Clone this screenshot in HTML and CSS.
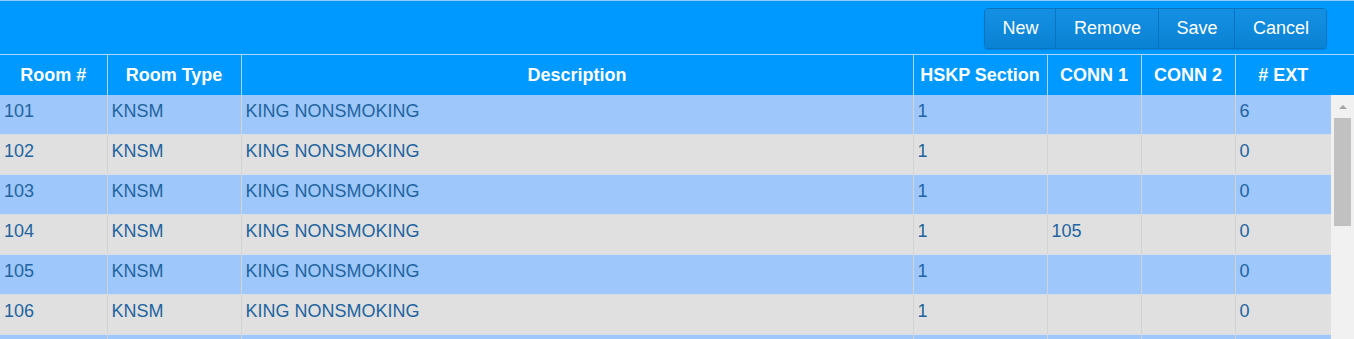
FILE: index.html
```html
<!DOCTYPE html>
<html lang="en">
<head>
  <meta charset="UTF-8">
  <title>Rooms</title>
  <link rel="stylesheet" href="styles.css">
</head>
<body>
  <div class="toolbar">
    <div class="btn-group">
      <button class="btn">New</button>
      <button class="btn">Remove</button>
      <button class="btn">Save</button>
      <button class="btn">Cancel</button>
    </div>
  </div>

  <div class="grid-head">
    <table class="head-table">
      <colgroup>
        <col class="c-room"><col class="c-type"><col class="c-desc"><col class="c-hskp">
        <col class="c-conn"><col class="c-conn"><col class="c-ext"><col class="c-gutter">
      </colgroup>
      <tr>
        <th>Room #</th>
        <th>Room Type</th>
        <th>Description</th>
        <th>HSKP Section</th>
        <th>CONN 1</th>
        <th>CONN 2</th>
        <th># EXT</th>
        <th class="gutter"></th>
      </tr>
    </table>
  </div>

  <div class="grid-body">
    <div class="rows">
      <table class="body-table">
        <colgroup>
          <col class="c-room"><col class="c-type"><col class="c-desc"><col class="c-hskp">
          <col class="c-conn"><col class="c-conn"><col class="c-ext">
        </colgroup>
        <tbody>
          <tr><td>101</td><td>KNSM</td><td>KING NONSMOKING</td><td>1</td><td></td><td></td><td>6</td></tr>
          <tr><td>102</td><td>KNSM</td><td>KING NONSMOKING</td><td>1</td><td></td><td></td><td>0</td></tr>
          <tr><td>103</td><td>KNSM</td><td>KING NONSMOKING</td><td>1</td><td></td><td></td><td>0</td></tr>
          <tr><td>104</td><td>KNSM</td><td>KING NONSMOKING</td><td>1</td><td>105</td><td></td><td>0</td></tr>
          <tr><td>105</td><td>KNSM</td><td>KING NONSMOKING</td><td>1</td><td></td><td></td><td>0</td></tr>
          <tr><td>106</td><td>KNSM</td><td>KING NONSMOKING</td><td>1</td><td></td><td></td><td>0</td></tr>
          <tr><td>107</td><td>KNSM</td><td>KING NONSMOKING</td><td>1</td><td></td><td></td><td>0</td></tr>
        </tbody>
      </table>
    </div>
    <div class="scrollbar">
      <span class="arrow-up"></span>
      <span class="thumb"></span>
    </div>
  </div>
</body>
</html>
```

FILE: styles.css
```css
body {
  margin: 0;
  font-family: "Liberation Sans", Arial, sans-serif;
  background-color: #f1f1f1;
  overflow: hidden;
}
.toolbar {
  height: 54px;
  box-sizing: border-box;
  border-top: 1px solid #8fcdff;
  background-color: #0099ff;
  display: flex;
  justify-content: flex-end;
  padding: 7px 27px 0 0;
}
.btn-group {
  display: flex;
  height: 39px;
  border: 1px solid #0a73c2;
  border-radius: 4px;
  overflow: hidden;
  box-shadow: 0 1px 1px rgba(0, 60, 120, 0.25);
}
.btn {
  font-family: inherit;
  font-size: 18px;
  color: #fff;
  background: linear-gradient(#1490e2, #0a82d4);
  border: none;
  border-left: 1px solid #0a73c2;
  padding: 0 17px 0 17.5px;
  margin: 0;
  cursor: pointer;
}
.btn:first-child {
  border-left: none;
}
.btn:hover {
  background: #0a78c4;
}
table {
  border-collapse: collapse;
  table-layout: fixed;
}
.c-room { width: 107px; }
.c-type { width: 134px; }
.c-desc { width: 672px; }
.c-hskp { width: 134px; }
.c-conn { width: 94px; }
.c-ext { width: 96px; }
.c-gutter { width: 23px; }
.grid-head {
  border-top: 1px solid #a8d8ff;
  background-color: #0099ff;
}
.head-table {
  width: 1354px;
}
.head-table th {
  height: 40px;
  padding: 0;
  font-size: 18px;
  font-weight: bold;
  color: #fff;
  text-align: center;
  border-left: 1px solid #b5d3ea;
}
.head-table th:first-child,
.head-table th.gutter {
  border-left: none;
}
.grid-body {
  display: flex;
  height: 244px;
  overflow: hidden;
}
.rows {
  width: 1331px;
}
.body-table {
  width: 1331px;
}
.body-table td {
  height: 22px;
  padding: 5px 4px 12px;
  line-height: 22px;
  font-size: 18px;
  color: #22649f;
  text-align: left;
  border-left: 1px solid #d2d2d2;
  border-bottom: 1px solid #d6dde6;
  white-space: nowrap;
}
.body-table td:first-child {
  border-left: none;
}
.body-table tr:nth-child(odd) td {
  background-color: #9ec7fc;
}
.body-table tr:nth-child(even) td {
  background-color: #e0e0e0;
}
.scrollbar {
  width: 23px;
  background-color: #f1f1f1;
  display: flex;
  flex-direction: column;
  align-items: center;
  padding-top: 10px;
}
.arrow-up {
  width: 0;
  height: 0;
  border-left: 4px solid transparent;
  border-right: 4px solid transparent;
  border-bottom: 4px solid #a3a3a3;
  margin-bottom: 9px;
}
.thumb {
  width: 17px;
  height: 108px;
  background-color: #c1c1c1;
}
```
